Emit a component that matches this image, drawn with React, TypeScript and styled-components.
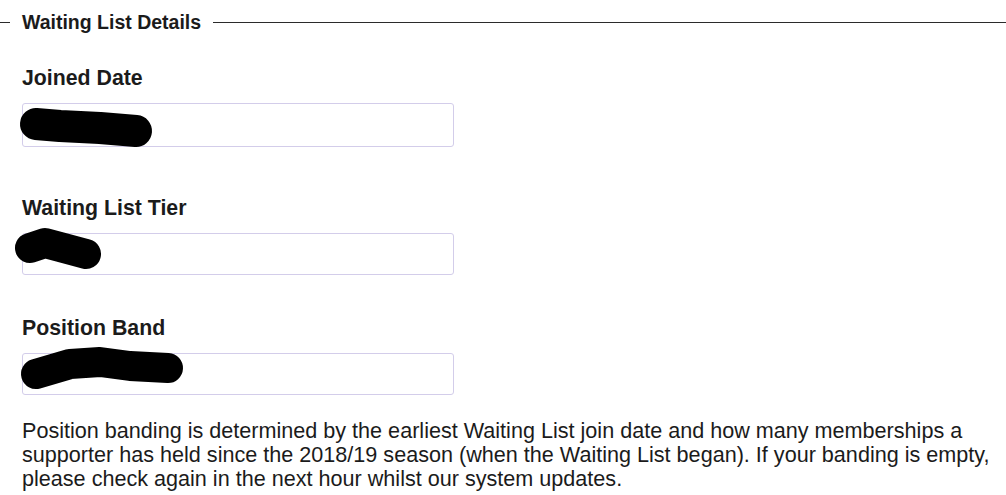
import React from "react";
import { styled, createGlobalStyle } from "styled-components";

const GlobalStyle = createGlobalStyle`
  html, body {
    margin: 0;
    padding: 0;
    background: #fff;
  }
  body {
    font-family: "Liberation Sans", Arial, sans-serif;
    color: #1b1b1b;
  }
`;

const Page = styled.div`
  width: 1006px;
  height: 495px;
  overflow: hidden;
  padding-top: 10px;
  box-sizing: border-box;
`;

const DetailsFieldset = styled.fieldset`
  margin: 0;
  padding: 0 0 0 10px;
  border: none;
  border-top: 1px solid #2b2b2b;
  min-width: 0;
`;

const Legend = styled.legend`
  padding: 0 12px;
  font-size: 19.5px;
  font-weight: 700;
  line-height: 24px;
  color: #1b1b1b;
`;

const Content = styled.div`
  padding: 0 6px 0 12px;
`;

const FieldGroup = styled.div<{ $top: number }>`
  display: flex;
  flex-direction: column;
  margin-top: ${(p) => p.$top}px;
`;

const Label = styled.label`
  font-size: 21.3px;
  font-weight: 700;
  line-height: 24px;
  color: #1b1b1b;
`;

const InputWrap = styled.div`
  position: relative;
  margin-top: 13px;
  width: 432px;
`;

const TextInput = styled.input<{ $height: number }>`
  display: block;
  box-sizing: border-box;
  width: 100%;
  height: ${(p) => p.$height}px;
  border: 1px solid #d3cdea;
  border-radius: 3px;
  background: #fff;
  padding: 0 10px;
  font-family: inherit;
  font-size: 18px;
  outline: none;
`;

const Redaction = styled.svg`
  position: absolute;
  left: -22px;
  top: -20px;
  overflow: visible;
  pointer-events: none;
`;

const HelpText = styled.p`
  margin: 24px 0 0;
  font-size: 21.6px;
  line-height: 24px;
  color: #1b1b1b;
`;

// black marker strokes hiding the personal values (x from page edge, y from 20px above the input)
const Scribble: React.FC<{ points: string; width: number }> = ({
  points,
  width,
}) => (
  <Redaction width="220" height="80">
    <polyline
      points={points}
      fill="none"
      stroke="#000"
      strokeWidth={width}
      strokeLinecap="round"
      strokeLinejoin="round"
    />
  </Redaction>
);

export default function App() {
  return (
    <Page>
      <GlobalStyle />
      <DetailsFieldset>
        <Legend>Waiting List Details</Legend>
        <Content>
          <FieldGroup $top={32}>
            <Label>Joined Date</Label>
            <InputWrap>
              <TextInput $height={44} readOnly />
              <Scribble points="36,41 60,43 100,45 136,48" width={32} />
            </InputWrap>
          </FieldGroup>

          <FieldGroup $top={49}>
            <Label>Waiting List Tier</Label>
            <InputWrap>
              <TextInput $height={42} readOnly />
              <Scribble points="30,35 45,30 60,34 86,41" width={30} />
            </InputWrap>
          </FieldGroup>

          <FieldGroup $top={41}>
            <Label>Position Band</Label>
            <InputWrap>
              <TextInput $height={42} readOnly />
              <Scribble
                points="36,41 70,31 100,29 130,33 168,35"
                width={30}
              />
            </InputWrap>
          </FieldGroup>

          <HelpText>
            Position banding is determined by the earliest Waiting List join
            date and how many memberships a supporter has held since the
            2018/19 season (when the Waiting List began). If your banding is
            empty, please check again in the next hour whilst our system
            updates.
          </HelpText>
        </Content>
      </DetailsFieldset>
    </Page>
  );
}
